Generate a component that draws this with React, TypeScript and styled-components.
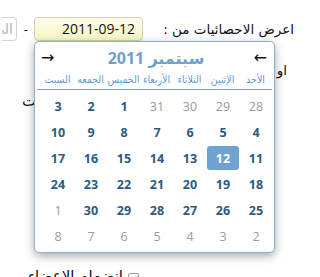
import styled, { createGlobalStyle } from "styled-components";

const GlobalStyle = createGlobalStyle`
  html, body {
    margin: 0;
    padding: 0;
    background: #ffffff;
    overflow: hidden;
  }
  body {
    font-family: "Open Sans", "DejaVu Sans", sans-serif;
    color: #111;
  }
`;

type Day = { n: number; muted?: boolean; selected?: boolean };

const weekDays = ["الأحد", "الإثنين", "الثلاثاء", "الأربعاء", "الخميس", "الجمعه", "السبت"];

const muted = (n: number): Day => ({ n, muted: true });
const day = (n: number): Day => ({ n });

const weeks: Day[][] = [
  [muted(28), muted(29), muted(30), muted(31), day(1), day(2), day(3)],
  [4, 5, 6, 7, 8, 9, 10].map(day),
  [day(11), { n: 12, selected: true }, day(13), day(14), day(15), day(16), day(17)],
  [18, 19, 20, 21, 22, 23, 24].map(day),
  [day(25), day(26), day(27), day(28), day(29), day(30), muted(1)],
  [2, 3, 4, 5, 6, 7, 8].map(muted),
];

const Page = styled.div`
  direction: rtl;
  width: 298px;
  height: 277px;
  padding: 17px 4px 0 0;
  box-sizing: border-box;
  overflow: hidden;
`;

const FormRow = styled.div<{ $top?: number; $indent?: number }>`
  display: flex;
  align-items: center;
  height: 24px;
  margin-top: ${(p) => p.$top ?? 0}px;
  padding-right: ${(p) => p.$indent ?? 0}px;
  white-space: nowrap;
`;

const Label = styled.span<{ $width?: number }>`
  flex-shrink: 0;
  width: ${(p) => (p.$width ? `${p.$width}px` : "auto")};
  font-family: "DejaVu Sans", sans-serif;
  font-size: 13.5px;
  color: #111;
`;

const Dash = styled.span`
  flex-shrink: 0;
  font-size: 13px;
  margin: 0 6px 0 7px;
`;

const DateField = styled.div`
  position: relative;
  flex-shrink: 0;
  margin-right: 28px;
`;

const DateInput = styled.div<{ $focused?: boolean }>`
  flex-shrink: 0;
  height: 24px;
  width: ${(p) => (p.$focused ? 109 : 15)}px;
  overflow: hidden;
  box-sizing: border-box;
  border: 1px solid ${(p) => (p.$focused ? "#d2d0b4" : "#d4d4d4")};
  border-left-width: ${(p) => (p.$focused ? 1 : 0)}px;
  border-radius: ${(p) => (p.$focused ? "4px" : "0 4px 4px 0")};
  background: ${(p) =>
    p.$focused ? "linear-gradient(#fdfce8, #f8f5c6)" : "#ffffff"};
  color: ${(p) => (p.$focused ? "#111" : "#b4b4b4")};
  font-size: 14px;
  line-height: 22px;
  padding: 0 ${(p) => (p.$focused ? 7 : 3)}px;
  text-align: right;
  white-space: nowrap;
  font-family: ${(p) =>
    p.$focused ? `"Open Sans", "DejaVu Sans", sans-serif` : `"DejaVu Sans", sans-serif`};
`;

const LeftText = styled.div`
  height: 18px;
  margin-top: 10px;
  display: flex;
  align-items: center;
  justify-content: flex-end;
  padding-left: 22px;
  font-family: "DejaVu Sans", sans-serif;
  font-size: 15px;
  white-space: nowrap;
`;

const CheckRow = styled.label`
  height: 18px;
  margin-top: 157px;
  padding-right: 155px;
  display: flex;
  align-items: center;
  gap: 5px;
  font-family: "DejaVu Sans", sans-serif;
  font-size: 15px;
  white-space: nowrap;
`;

const CheckBox = styled.span`
  flex-shrink: 0;
  width: 9px;
  height: 9px;
  margin-top: 4px;
  border: 1px solid #9a9a9a;
  border-radius: 2px;
  background: linear-gradient(#fff, #e6e6e6);
`;

const Popup = styled.div`
  position: absolute;
  top: 24px;
  left: 0;
  width: 241px;
  height: 212px;
  box-sizing: border-box;
  background: #ffffff;
  border: 1px solid #8eb0ca;
  border-radius: 5px;
  box-shadow: 0 3px 10px rgba(0, 0, 0, 0.35);
  padding: 0 2px;
  z-index: 5;
`;

const Header = styled.div`
  height: 31px;
  display: flex;
  align-items: center;
  justify-content: space-between;
  padding: 0 5px 0 4px;
`;

const NavArrow = styled.span`
  font-family: "DejaVu Sans", sans-serif;
  font-size: 16px;
  color: #111;
  line-height: 1;
`;

const Title = styled.span`
  font-family: "Open Sans", "DejaVu Sans", sans-serif;
  font-size: 16px;
  font-weight: bold;
  color: #6f9fca;
  margin-left: 4px;
`;

const WeekRow = styled.div`
  display: grid;
  grid-template-columns: repeat(7, 33px);
  justify-content: center;
  height: 16px;
  align-items: start;
  border-bottom: 1px solid #7fa6c4;
  padding-left: 4px;
`;

const WeekDay = styled.span`
  font-family: "DejaVu Sans", sans-serif;
  font-stretch: condensed;
  font-size: 10.5px;
  line-height: 12px;
  color: #5f9bd0;
  text-align: center;
  white-space: nowrap;
`;

const DaysGrid = styled.div`
  display: grid;
  grid-template-columns: repeat(7, 33px);
  grid-auto-rows: 26px;
  justify-content: center;
  padding: 3px 0 0 4px;
`;

const DayCell = styled.span<{ $muted?: boolean; $selected?: boolean }>`
  margin: 1px 0 1px 1px;
  display: flex;
  align-items: center;
  justify-content: center;
  border-radius: 3px;
  font-size: 12.5px;
  font-weight: ${(p) => (p.$muted ? "normal" : "bold")};
  color: ${(p) => (p.$selected ? "#ffffff" : p.$muted ? "#9a9a9a" : "#2b5b82")};
  background: ${(p) => (p.$selected ? "#6fa4d0" : "transparent")};
`;

function Calendar() {
  return (
    <Popup>
      <Header>
        <NavArrow>←</NavArrow>
        <Title>سبتمبر 2011</Title>
        <NavArrow>→</NavArrow>
      </Header>
      <WeekRow>
        {weekDays.map((d) => (
          <WeekDay key={d}>{d}</WeekDay>
        ))}
      </WeekRow>
      <DaysGrid>
        {weeks.flat().map((d, i) => (
          <DayCell key={i} $muted={d.muted} $selected={d.selected}>
            {d.n}
          </DayCell>
        ))}
      </DaysGrid>
    </Popup>
  );
}

export default function App() {
  return (
    <>
      <GlobalStyle />
      <Page>
        <FormRow>
          <Label $width={123}>اعرض الاحصائيات من :</Label>
          <DateField>
            <DateInput $focused>2011-09-12</DateInput>
            <Calendar />
          </DateField>
          <Dash>-</Dash>
          <DateInput>الى</DateInput>
        </FormRow>
        <FormRow $top={17} $indent={7}>
          <Label>او</Label>
        </FormRow>
        <LeftText>وقت</LeftText>
        <CheckRow>
          <CheckBox />
          <span>انضمام الاعضاء</span>
        </CheckRow>
      </Page>
    </>
  );
}
